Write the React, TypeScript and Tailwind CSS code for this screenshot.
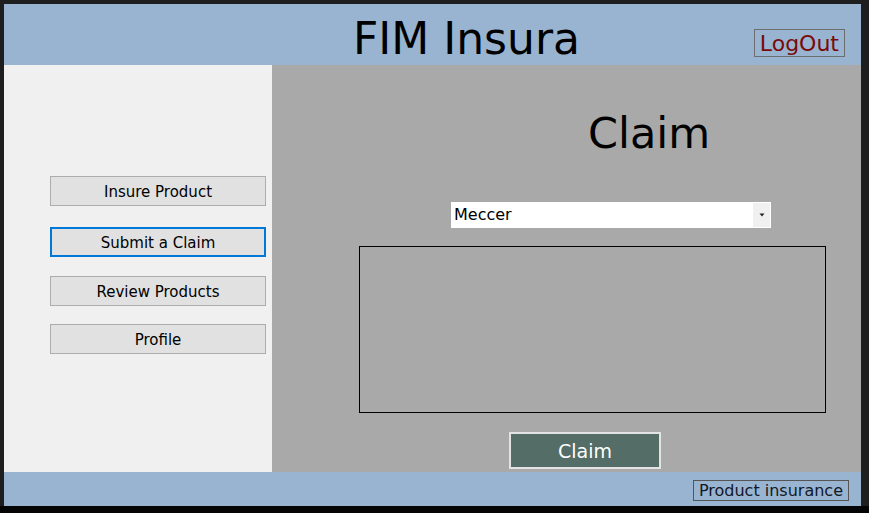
import React from "react";

export default function App() {
  const font = { fontFamily: '"DejaVu Sans", Verdana, sans-serif' };
  return (
    <div className="w-[869px] h-[513px] bg-[#1e1e1e] flex flex-col overflow-hidden" style={font}>
      <div className="flex pt-[4px] pl-[4px]">
        <div className="w-[857px] h-[502px] flex flex-col">
          {/* Header */}
          <div className="h-[61px] bg-[#99b4d1] flex items-start relative">
            <div className="ml-[349px] mt-[11px] text-[44px] leading-[48px] text-black">FIM Insura</div>
            <div className="ml-auto mr-[16px] mt-[25px] h-[28px] px-[5px] border border-[#6d6d6d] text-[#7a0a0a] text-[22px] leading-[27px]">
              LogOut
            </div>
          </div>
          {/* Body */}
          <div className="h-[407px] flex">
            <div className="w-[268px] bg-[#f0f0f0] flex flex-col pl-[46px] pt-[111px]">
              <div className="w-[216px] h-[30px] pt-[2px] bg-[#e1e1e1] border border-[#adadad] flex items-center justify-center text-[15px] text-black">
                Insure Product
              </div>
              <div className="mt-[21px] w-[216px] h-[30px] pt-[2px] bg-[#e1e1e1] border-2 border-[#0078d7] flex items-center justify-center text-[15px] text-black">
                Submit a Claim
              </div>
              <div className="mt-[19px] w-[216px] h-[30px] pt-[2px] bg-[#e1e1e1] border border-[#adadad] flex items-center justify-center text-[15px] text-black">
                Review Products
              </div>
              <div className="mt-[18px] w-[216px] h-[30px] pt-[2px] bg-[#e1e1e1] border border-[#adadad] flex items-center justify-center text-[15px] text-black">
                Profile
              </div>
            </div>
            <div className="w-[589px] bg-[#a9a9a9] flex flex-col">
              <div className="ml-[316px] mt-[44px] text-[43px] leading-[48px] text-black">Claim</div>
              <div className="ml-[179px] mt-[45px] w-[320px] h-[26px] bg-white flex items-stretch">
                <div className="flex-1 pl-[3px] text-[16px] leading-[26px] text-black">Meccer</div>
                <div className="w-[17px] my-[1px] mr-[1px] bg-[#f0f0f0] flex items-center justify-center">
                  <svg width="6" height="4" viewBox="0 0 6 4">
                    <path d="M0.5 0.5 L5.5 0.5 L3 3.5 Z" fill="#222" />
                  </svg>
                </div>
              </div>
              <div className="ml-[87px] mt-[18px] w-[467px] h-[167px] border border-black"></div>
              <div className="ml-[237px] mt-[19px] w-[152px] h-[37px] pt-[2px] bg-[#546d66] border-2 border-[#e3e3e3] flex items-center justify-center text-white text-[19px]">
                Claim
              </div>
            </div>
          </div>
          {/* Footer */}
          <div className="h-[34px] bg-[#99b4d1] flex items-start">
            <div className="ml-auto mr-[12px] mt-[8px] h-[21px] px-[5px] border border-[#555] text-[#111827] text-[16px] leading-[19px]">
              Product insurance
            </div>
          </div>
        </div>
      </div>
      <div className="flex-1 bg-[#050505]"></div>
    </div>
  );
}
